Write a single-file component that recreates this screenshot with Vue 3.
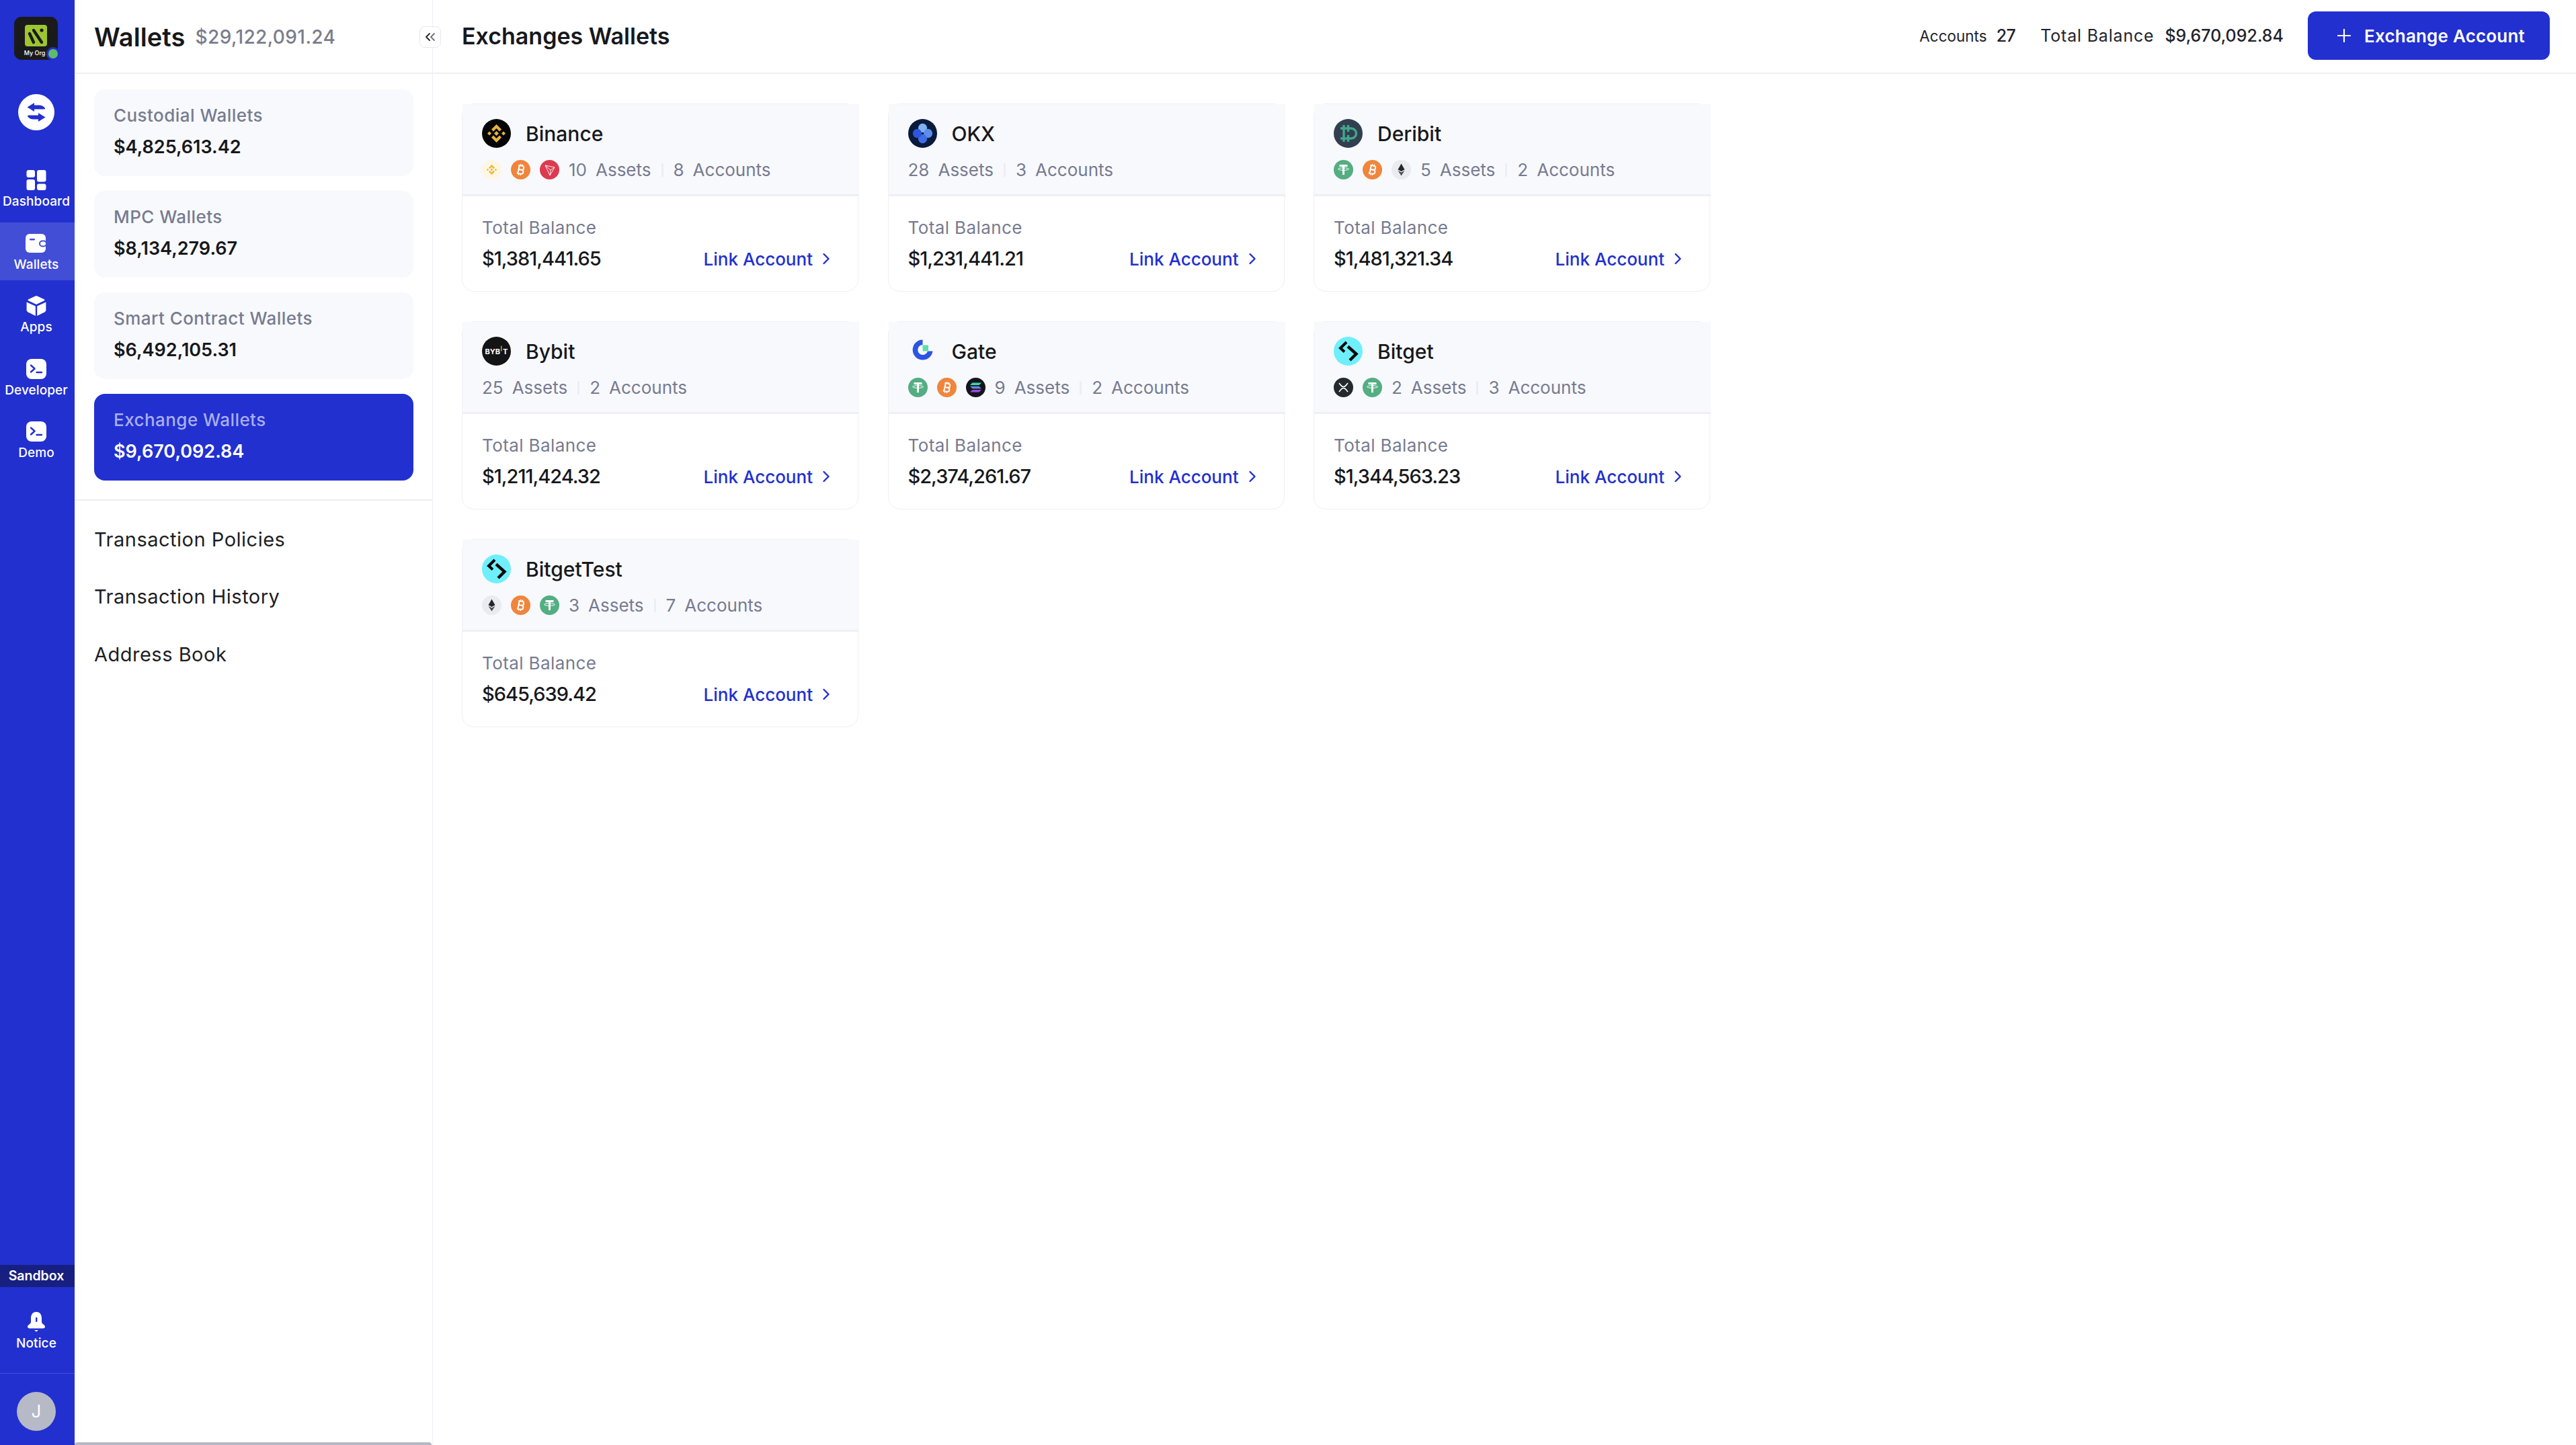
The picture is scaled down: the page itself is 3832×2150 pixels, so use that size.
<template>
  <div class="app">
    <!-- LEFT NAV -->
    <nav class="nav">
      <div class="org">
        <div class="org-mark">
          <svg viewBox="0 0 33 32" width="33" height="32">
            <path d="M7 13 L13 26 M13 8 L25 26" stroke="#1a1a1a" stroke-width="4.4" stroke-linecap="round" fill="none" />
            <circle cx="25" cy="8" r="2.6" fill="#1a1a1a" />
          </svg>
        </div>
        <div class="org-name">My Org</div>
        <span class="org-dot"></span>
      </div>

      <div class="swap">
        <svg viewBox="0 0 54 54" width="54" height="54">
          <path d="M24 13 L13.5 19.5 L24 26 V22.5 H38 Q40.5 22.5 40 21 Q37 16.5 31 16.5 H24Z" fill="#2230d0" />
          <path d="M30 41 L40.5 34.5 L30 28 V31.5 H16 Q13.5 31.5 14 33 Q17 37.5 23 37.5 H30Z" fill="#2230d0" />
        </svg>
      </div>

      <div class="nav-items">
        <div v-for="n in navItems" :key="n.label" class="nav-item" :class="{ active: n.active }">
          <svg v-if="n.icon === 'dash'" viewBox="0 0 30 30" width="30" height="30" fill="#fff">
            <rect x="0.5" y="0" width="12.5" height="11" rx="3" />
            <rect x="16" y="0" width="13.5" height="17.5" rx="3" />
            <rect x="0.5" y="14" width="12.5" height="16" rx="3" />
            <rect x="16" y="20.5" width="13.5" height="9.5" rx="3" />
          </svg>
          <svg v-else-if="n.icon === 'wallet'" viewBox="0 0 32 30" width="32" height="30">
            <rect x="0" y="1" width="30" height="28" rx="6" fill="#fff" />
            <rect x="6" y="8" width="8" height="2.4" rx="1.2" fill="#434ed6" />
            <rect x="21" y="11.5" width="10" height="8" rx="4" fill="#fff" stroke="#434ed6" stroke-width="2" />
          </svg>
          <svg v-else-if="n.icon === 'apps'" viewBox="0 0 30 30" width="30" height="30" fill="#fff">
            <path d="M13.6 0.6 Q15 0 16.4 0.6 L27 5.6 Q28 6.4 27 7.2 L15 13 L3 7.2 Q2 6.4 3 5.6Z" />
            <path d="M0.6 9.4 L13.8 15.6 V30 L2.4 24.2 Q0.6 23.2 0.6 21.4Z" />
            <path d="M29.4 9.4 L16.2 15.6 V30 L27.6 24.2 Q29.4 23.2 29.4 21.4Z" />
          </svg>
          <svg v-else viewBox="0 0 30 30" width="30" height="30">
            <rect x="0" y="0" width="30" height="30" rx="8" fill="#fff" />
            <path d="M7 9.5 L12.5 14.5 L7 19.5" stroke="#2230d0" stroke-width="2.4" fill="none" stroke-linecap="round" stroke-linejoin="round" />
            <path d="M15.5 20 H23" stroke="#2230d0" stroke-width="2.4" stroke-linecap="round" />
          </svg>
          <div class="nav-label">{{ n.label }}</div>
        </div>
      </div>

      <div class="sandbox">Sandbox</div>

      <div class="notice">
        <svg viewBox="0 0 26 30" width="26" height="30">
          <path d="M13 0 C7 0 5 5 5 9 V15 C5 18 0 19 0 22 C0 24 2 24.5 4 24.5 H22 C24 24.5 26 24 26 22 C26 19 21 18 21 15 V9 C21 5 19 0 13 0Z" fill="#fff" />
          <rect x="12" y="8" width="2.4" height="7" rx="1.2" fill="#2230d0" />
          <path d="M10 27 H16 L13 29.5Z" fill="#fff" />
        </svg>
        <div class="nav-label">Notice</div>
      </div>

      <div class="user">
        <div class="avatar">J</div>
      </div>
    </nav>

    <!-- WALLET PANEL -->
    <aside class="panel">
      <div class="panel-head">
        <span class="panel-title">Wallets</span>
        <span class="panel-total">$29,122,091.24</span>
      </div>
      <button class="collapse">
        <svg viewBox="0 0 16 14" width="16" height="14" fill="none" stroke-width="1.8" stroke-linecap="round" stroke-linejoin="round">
          <path d="M7 2 L2 7 L7 12" stroke="#24262e" />
          <path d="M14 2 L9 7 L14 12" stroke="#6d7180" />
        </svg>
      </button>

      <div class="wallet-types">
        <div v-for="w in walletTypes" :key="w.name" class="wallet-type" :class="{ active: w.active }">
          <div class="wt-name">{{ w.name }}</div>
          <div class="wt-amount">{{ w.amount }}</div>
        </div>
      </div>

      <div class="panel-menu">
        <div v-for="m in menu" :key="m" class="menu-item">{{ m }}</div>
      </div>

      <div class="panel-scroll"></div>
    </aside>

    <!-- MAIN -->
    <main class="main">
      <header class="main-head">
        <h1 class="main-title">Exchanges Wallets</h1>
        <div class="head-stats">
          <span class="stat-small">Accounts</span>
          <span class="stat-num">27</span>
          <span class="stat-label">Total Balance</span>
          <span class="stat-amount">$9,670,092.84</span>
        </div>
        <button class="add-btn">
          <svg viewBox="0 0 20 20" width="20" height="20">
            <path d="M10 1 V19 M1 10 H19" stroke="#fff" stroke-width="2.2" stroke-linecap="round" />
          </svg>
          Exchange Account
        </button>
      </header>

      <div class="grid">
        <div v-for="c in exchanges" :key="c.name" class="card">
          <div class="card-head">
            <div class="card-title">
              <svg class="logo" viewBox="0 0 43 43" width="43" height="43">
                <template v-if="c.logo === 'binance'">
                  <circle cx="21.5" cy="21.5" r="21.5" fill="#050505" />
                  <g fill="#e8b53a">
                    <path d="M21.5 8 L29 15.5 L26 18.5 L21.5 14 L17 18.5 L14 15.5Z" />
                    <path d="M21.5 35 L29 27.5 L26 24.5 L21.5 29 L17 24.5 L14 27.5Z" />
                    <path d="M21.5 18 L25 21.5 L21.5 25 L18 21.5Z" />
                    <path d="M11 18.5 L14 21.5 L11 24.5 L8 21.5Z" />
                    <path d="M32 18.5 L35 21.5 L32 24.5 L29 21.5Z" />
                  </g>
                </template>
                <template v-else-if="c.logo === 'okx'">
                  <circle cx="21.5" cy="21.5" r="21.5" fill="#0a1a3d" />
                  <ellipse cx="21.5" cy="13.5" rx="6.6" ry="6.8" fill="#7fb0f2" />
                  <ellipse cx="29.5" cy="21.5" rx="6.6" ry="6.8" fill="#5c8eea" />
                  <ellipse cx="21.5" cy="29.5" rx="6.6" ry="6.8" fill="#3f6fe6" />
                  <ellipse cx="13.5" cy="21.5" rx="6.6" ry="6.8" fill="#2b56dd" />
                  <circle cx="21.5" cy="21.5" r="1.2" fill="#0a1a3d" />
                </template>
                <template v-else-if="c.logo === 'deribit'">
                  <circle cx="21.5" cy="21.5" r="21.5" fill="#313f50" />
                  <path d="M9 14 H25 A7.5 7.5 0 0 1 25 29 H9 M14 14 V29 M20.5 14 V29 M14 9 V14 M20.5 9 V14 M14 29 V34 M20.5 29 V34" transform="translate(1 0)" stroke="#44a58a" stroke-width="3.4" fill="none" />
                  <path d="M17 19 H25 A2.5 2.5 0 0 1 25 24 H17Z" fill="#313f50" />
                </template>
                <template v-else-if="c.logo === 'bybit'">
                  <circle cx="21.5" cy="21.5" r="21.5" fill="#141416" />
                  <text x="4.5" y="25.5" class="bybit-text">BYB</text>
                  <rect x="28" y="13.5" width="1.4" height="8" fill="#f7a600" />
                  <text x="31" y="25.5" class="bybit-text">T</text>
                </template>
                <template v-else-if="c.logo === 'gate'">
                  <circle cx="21.5" cy="21.5" r="21.5" fill="#f8f9fd" />
                  <path d="M21.5 4.5 A15 15 0 1 0 36.5 21.5 H29 A7.5 7.5 0 1 1 21.5 12Z" fill="#2b55e3" />
                  <rect x="21.5" y="12.5" width="8.5" height="9" fill="#5fe0a6" />
                </template>
                <template v-else>
                  <circle cx="21.5" cy="21.5" r="21.5" fill="#6eeffb" />
                  <path d="M19 8 L10 17 L16 22.5" fill="none" stroke="#060606" stroke-width="4" />
                  <path d="M24 35 L33.5 25.5 L21 14.5" fill="none" stroke="#060606" stroke-width="4.4" />
                </template>
              </svg>
              <span class="card-name">{{ c.name }}</span>
            </div>
            <div class="card-meta">
              <svg v-for="t in c.coins" :key="t" class="coin" viewBox="0 0 29 29" width="29" height="29">
                <template v-if="t === 'btc'">
                  <circle cx="14.5" cy="14.5" r="14.5" fill="#f0853b" />
                  <g transform="rotate(12 14.5 14.5)" fill="none" stroke="#fff" stroke-width="2">
                    <path d="M11.5 8 V21 M10 8.5 H15.5 A3 3 0 0 1 15.5 14.5 H11.5 M11.5 14.5 H16 A3 3 0 0 1 16 20.5 H10" />
                    <path d="M13 6 V8 M16 6 V8 M13 21 V23 M16 21 V23" stroke-width="1.3" />
                  </g>
                </template>
                <template v-else-if="t === 'bnb'">
                  <circle cx="14.5" cy="14.5" r="14.5" fill="#fdf6e2" />
                  <g fill="#eab83f">
                    <path d="M14.5 7 L19 11.5 L17.2 13.2 L14.5 10.5 L11.8 13.2 L10 11.5Z" />
                    <path d="M14.5 22 L19 17.5 L17.2 15.8 L14.5 18.5 L11.8 15.8 L10 17.5Z" />
                    <path d="M14.5 12.5 L16.5 14.5 L14.5 16.5 L12.5 14.5Z" />
                    <path d="M8.5 12.8 L10.2 14.5 L8.5 16.2 L6.8 14.5Z" />
                    <path d="M20.5 12.8 L22.2 14.5 L20.5 16.2 L18.8 14.5Z" />
                  </g>
                </template>
                <template v-else-if="t === 'tron'">
                  <circle cx="14.5" cy="14.5" r="14.5" fill="#dc3a50" />
                  <path d="M8 8 L22 11 L15 23Z M8 8 L16 15 L22 11 M16 15 L15 23" fill="none" stroke="#fff" stroke-width="0.9" stroke-linejoin="round" />
                </template>
                <template v-else-if="t === 'usdt'">
                  <circle cx="14.5" cy="14.5" r="14.5" fill="#53ae82" />
                  <path d="M8.5 8.5 H20.5 M14.5 8.5 V22" stroke="#fff" stroke-width="3" fill="none" />
                  <ellipse cx="14.5" cy="13.5" rx="8" ry="1.8" fill="none" stroke="#fff" stroke-width="1" />
                </template>
                <template v-else-if="t === 'eth'">
                  <circle cx="14.5" cy="14.5" r="14.5" fill="#eaebef" />
                  <path d="M14.5 5.5 L19.5 14.2 L14.5 17 L9.5 14.2Z" fill="#25262b" />
                  <path d="M9.5 15.8 L14.5 18.6 L19.5 15.8 L14.5 23.5Z" fill="#4b4c52" />
                </template>
                <template v-else-if="t === 'sol'">
                  <circle cx="14.5" cy="14.5" r="14.5" fill="#15161c" />
                  <path d="M9.5 7.5 H23 L19.5 11 H6Z" fill="#3fd6b0" />
                  <path d="M6 12.8 H19.5 L23 16.2 H9.5Z" fill="#5f8fd8" />
                  <path d="M9.5 18 H23 L19.5 21.5 H6Z" fill="#a345e8" />
                </template>
                <template v-else>
                  <circle cx="14.5" cy="14.5" r="14.5" fill="#23292f" />
                  <path d="M8 8 C11 12 12 13.5 14.5 13.5 C17 13.5 18 12 21 8 M8 21 C11 17 12 15.5 14.5 15.5 C17 15.5 18 17 21 21" fill="none" stroke="#fff" stroke-width="1.6" />
                </template>
              </svg>
              <span class="meta-text"><b>{{ c.assets }}</b><span>Assets</span></span>
              <i class="meta-sep"></i>
              <span class="meta-text"><b>{{ c.accounts }}</b><span>Accounts</span></span>
            </div>
          </div>
          <div class="card-body">
            <div class="body-label">Total Balance</div>
            <div class="body-row">
              <span class="body-amount">{{ c.balance }}</span>
              <a class="link">
                Link Account
                <svg viewBox="0 0 12 18" width="12" height="18">
                  <path d="M2.5 2 L9.5 9 L2.5 16" stroke="#2230d0" stroke-width="2.4" fill="none" stroke-linecap="round" stroke-linejoin="round" />
                </svg>
              </a>
            </div>
          </div>
        </div>
      </div>
    </main>
  </div>
</template>

<script setup>
const navItems = [
  { label: 'Dashboard', icon: 'dash' },
  { label: 'Wallets', icon: 'wallet', active: true },
  { label: 'Apps', icon: 'apps' },
  { label: 'Developer', icon: 'term' },
  { label: 'Demo', icon: 'term' }
]

const walletTypes = [
  { name: 'Custodial Wallets', amount: '$4,825,613.42' },
  { name: 'MPC Wallets', amount: '$8,134,279.67' },
  { name: 'Smart Contract Wallets', amount: '$6,492,105.31' },
  { name: 'Exchange Wallets', amount: '$9,670,092.84', active: true }
]

const menu = ['Transaction Policies', 'Transaction History', 'Address Book']

const exchanges = [
  { name: 'Binance', logo: 'binance', coins: ['bnb', 'btc', 'tron'], assets: 10, accounts: 8, balance: '$1,381,441.65' },
  { name: 'OKX', logo: 'okx', coins: [], assets: 28, accounts: 3, balance: '$1,231,441.21' },
  { name: 'Deribit', logo: 'deribit', coins: ['usdt', 'btc', 'eth'], assets: 5, accounts: 2, balance: '$1,481,321.34' },
  { name: 'Bybit', logo: 'bybit', coins: [], assets: 25, accounts: 2, balance: '$1,211,424.32' },
  { name: 'Gate', logo: 'gate', coins: ['usdt', 'btc', 'sol'], assets: 9, accounts: 2, balance: '$2,374,261.67' },
  { name: 'Bitget', logo: 'bitget', coins: ['xrp', 'usdt'], assets: 2, accounts: 3, balance: '$1,344,563.23' },
  { name: 'BitgetTest', logo: 'bitget', coins: ['eth', 'btc', 'usdt'], assets: 3, accounts: 7, balance: '$645,639.42' }
]
</script>

<style scoped>
.app {
  display: flex;
  height: 2150px;
  overflow: hidden;
  background: #fff;
  font-family: "Inter", "Noto Sans", sans-serif;
  color: #17181c;
}

/* nav */
.nav {
  width: 111px;
  flex: none;
  background: #2230d0;
  display: flex;
  flex-direction: column;
  color: #fff;
}
.org {
  position: relative;
  width: 65px;
  height: 64px;
  margin: 25px 0 0 21px;
  background: #1a1a1a;
  border-radius: 11px;
  box-sizing: border-box;
  padding-top: 12px;
  display: flex;
  flex-direction: column;
  align-items: center;
}
.org-mark {
  width: 33px;
  height: 32px;
  background: #9dc62f;
  border-radius: 4px;
}
.org-name {
  font-size: 9px;
  font-weight: 500;
  line-height: 14px;
  margin-top: 3px;
  margin-right: 4px;
}
.org-dot {
  position: absolute;
  right: -3px;
  bottom: -1px;
  width: 14px;
  height: 14px;
  background: #5dbb6d;
  border: 3px solid #2230d0;
  border-radius: 50%;
}
.swap {
  width: 54px;
  height: 54px;
  margin: 51px 0 0 27px;
  background: #fff;
  border-radius: 50%;
}
.nav-items {
  display: flex;
  flex-direction: column;
  gap: 7.5px;
  margin-top: 43px;
}
.nav-item {
  height: 86px;
  box-sizing: border-box;
  padding: 16px 3px 0 0;
  display: flex;
  flex-direction: column;
  align-items: center;
}
.nav-item.active {
  background: #434ed6;
}
.nav-label {
  font-size: 19px;
  font-weight: 500;
  line-height: 24px;
  margin-top: 5px;
  letter-spacing: .1px;
  white-space: nowrap;
}
.sandbox {
  margin-top: auto;
  height: 33px;
  padding-right: 3px;
  background: #171f80;
  font-size: 19.5px;
  font-weight: 600;
  line-height: 33px;
  text-align: center;
}
.notice {
  height: 129px;
  box-sizing: border-box;
  padding: 37px 3px 0 0;
  display: flex;
  flex-direction: column;
  align-items: center;
  border-bottom: 1px solid #434ed6;
}
.user {
  height: 106px;
  box-sizing: border-box;
  padding: 27px 0 0 25px;
}
.avatar {
  width: 58px;
  height: 58px;
  border-radius: 50%;
  background: #b6b9c6;
  color: #fff;
  font-size: 26px;
  line-height: 58px;
  text-align: center;
}

/* panel */
.panel {
  position: relative;
  width: 533px;
  flex: none;
  box-sizing: border-box;
  border-right: 1px solid #eeeff4;
}
.panel-head {
  height: 110px;
  box-sizing: border-box;
  border-bottom: 2px solid #eeeff4;
  padding: 2px 0 0 29px;
  display: flex;
  align-items: center;
  gap: 15px;
}
.panel-title {
  font-size: 38px;
  font-weight: 600;
  letter-spacing: .1px;
  color: #17181c;
}
.panel-total {
  font-size: 28px;
  font-weight: 500;
  color: #7a7d8c;
  letter-spacing: .4px;
}
.collapse {
  position: absolute;
  left: 513px;
  top: 39px;
  width: 32px;
  height: 32px;
  padding: 0;
  background: #fff;
  border: 1px solid #e6e7ee;
  border-radius: 8px;
  display: flex;
  align-items: center;
  justify-content: center;
}
.wallet-types {
  display: flex;
  flex-direction: column;
  gap: 22.5px;
  padding: 23px 28px 28px 29px;
  border-bottom: 2px solid #eeeff4;
}
.wallet-type {
  height: 128.5px;
  box-sizing: border-box;
  padding: 20px 29px 0;
  background: #f8f9fd;
  border-radius: 16px;
}
.wallet-type.active {
  background: #2230d0;
}
.wt-name {
  font-size: 26px;
  font-weight: 500;
  line-height: 38px;
  letter-spacing: .45px;
  color: #777b90;
}
.wt-amount {
  font-size: 27px;
  font-weight: 600;
  line-height: 40px;
  margin-top: 8px;
  color: #17181c;
}
.wallet-type.active .wt-name {
  color: #a9aeee;
}
.wallet-type.active .wt-amount {
  color: #fff;
}
.panel-menu {
  padding: 15px 0 0 29px;
}
.menu-item {
  height: 85.5px;
  line-height: 85.5px;
  font-size: 29px;
  letter-spacing: .5px;
  color: #1d1e24;
}
.panel-scroll {
  position: absolute;
  left: 0;
  right: 1px;
  bottom: 0;
  height: 4px;
  background: #b4b7c3;
  border-radius: 4px 4px 0 0;
}

/* main */
.main {
  flex: 1;
  min-width: 0;
}
.main-head {
  height: 110px;
  box-sizing: border-box;
  border-bottom: 2px solid #eeeff4;
  padding: 0 39px 2px 43px;
  display: flex;
  align-items: center;
}
.main-title {
  margin: 0;
  font-size: 34px;
  font-weight: 600;
  color: #17181c;
}
.head-stats {
  margin-left: auto;
  margin-right: 36px;
  display: flex;
  align-items: center;
  color: #22232a;
}
.stat-small {
  font-size: 22.5px;
}
.stat-num {
  font-size: 25px;
  font-weight: 500;
  margin-left: 14px;
  letter-spacing: -.5px;
}
.stat-label {
  font-size: 25px;
  letter-spacing: .8px;
  margin-left: 37px;
}
.stat-amount {
  font-size: 25px;
  font-weight: 500;
  margin-left: 16px;
}
.add-btn {
  width: 360px;
  height: 72px;
  border: 0;
  border-radius: 12px;
  background: #2230d0;
  color: #fff;
  font: 600 26px "Inter", sans-serif;
  letter-spacing: .2px;
  display: flex;
  align-items: center;
  justify-content: center;
  gap: 20px;
  padding: 0 0 0 7px;
}
.grid {
  display: grid;
  grid-template-columns: repeat(3, 590px);
  column-gap: 43.5px;
  row-gap: 44px;
  padding: 44px 0 0 43px;
}
.card {
  height: 280px;
  box-sizing: border-box;
  border: 1px solid #eff0f5;
  border-radius: 18px;
}
.card-head {
  height: 137px;
  box-sizing: border-box;
  margin-right: -2px;
  padding: 22px 30px 0 29px;
  background: #f8f9fd;
  border-bottom: 3px solid #eff0f5;
}
.card-title {
  display: flex;
  align-items: center;
  gap: 22px;
}
.card-name {
  font-size: 30px;
  font-weight: 500;
  color: #17181c;
}
.card-meta {
  display: flex;
  align-items: center;
  gap: 14px;
  margin-top: 18px;
  height: 29px;
  color: #777b90;
  font-size: 26px;
}
.meta-text {
  display: flex;
  gap: 13px;
}
.meta-text b {
  font-weight: 400;
}
.meta-sep {
  width: 3px;
  height: 20px;
  margin: 0 1px;
  background: #eceef3;
}
.card-body {
  padding: 28px 41px 0 29px;
}
.body-label {
  font-size: 26px;
  line-height: 38px;
  letter-spacing: .4px;
  color: #777b90;
}
.body-row {
  margin-top: 7px;
  display: flex;
  align-items: center;
  justify-content: space-between;
}
.body-amount {
  font-size: 29px;
  line-height: 40px;
  font-weight: 500;
  letter-spacing: -1px;
  color: #17181c;
}
.link {
  display: flex;
  align-items: center;
  gap: 14px;
  font-size: 26px;
  font-weight: 500;
  color: #2230d0;
}
</style>

<style>
html, body {
  margin: 0;
  background: #fff;
}
.bybit-text {
  font: 700 11px "Inter", sans-serif;
  fill: #fff;
}
</style>
